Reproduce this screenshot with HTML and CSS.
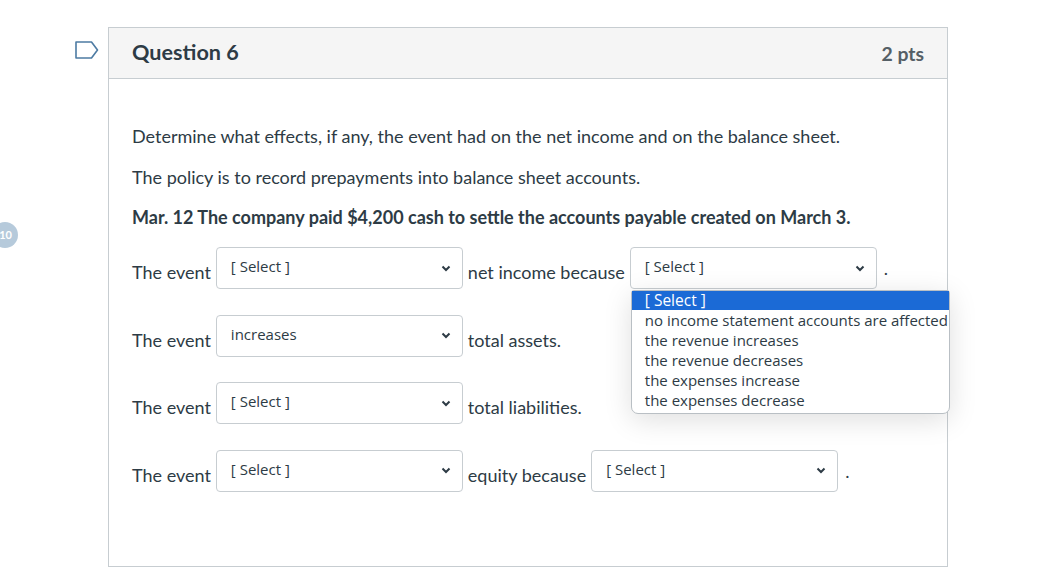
FILE: index.html
```html
<!DOCTYPE html>
<html>
<head>
<meta charset="utf-8">
<link rel="stylesheet" href="styles.css">
</head>
<body>
<div class="badge">10</div>
<div class="page">
  <div class="gutter">
    <svg class="flag" width="24" height="18" viewBox="0 0 24 18"><path d="M1 1 H16.5 L22.5 9 L16.5 17 H1 Z" fill="none" stroke="#4d7ba3" stroke-width="1.6" stroke-linejoin="round"/></svg>
  </div>
  <div class="card">
    <div class="card-head">
      <span class="q-title">Question 6</span>
      <span class="q-pts">2 pts</span>
    </div>
    <div class="card-body">
      <p class="para">Determine what effects, if any, the event had on the net income and on the balance sheet.</p>
      <p class="para">The policy is to record prepayments into balance sheet accounts.</p>
      <p class="para strong">Mar. 12 The company paid $4,200 cash to settle the accounts payable created on March 3.</p>

      <div class="row">
        <span class="lbl">The event</span>
        <div class="sel"><span class="sel-text">[ Select ]</span><svg class="chev" width="10" height="7" viewBox="0 0 10 7"><path d="M1.5 1.5 L5 5 L8.5 1.5" fill="none" stroke="#2d3b45" stroke-width="2"/></svg></div>
        <span class="lbl">net income because</span>
        <div class="sel open"><span class="sel-text">[ Select ]</span><svg class="chev" width="10" height="7" viewBox="0 0 10 7"><path d="M1.5 1.5 L5 5 L8.5 1.5" fill="none" stroke="#2d3b45" stroke-width="2"/></svg>
          <ul class="menu">
            <li class="opt active">[ Select ]</li>
            <li class="opt">no income statement accounts are affected</li>
            <li class="opt">the revenue increases</li>
            <li class="opt">the revenue decreases</li>
            <li class="opt">the expenses increase</li>
            <li class="opt">the expenses decrease</li>
          </ul>
        </div>
        <span class="lbl dot">.</span>
      </div>

      <div class="row">
        <span class="lbl">The event</span>
        <div class="sel"><span class="sel-text">increases</span><svg class="chev" width="10" height="7" viewBox="0 0 10 7"><path d="M1.5 1.5 L5 5 L8.5 1.5" fill="none" stroke="#2d3b45" stroke-width="2"/></svg></div>
        <span class="lbl">total assets.</span>
      </div>

      <div class="row">
        <span class="lbl">The event</span>
        <div class="sel"><span class="sel-text">[ Select ]</span><svg class="chev" width="10" height="7" viewBox="0 0 10 7"><path d="M1.5 1.5 L5 5 L8.5 1.5" fill="none" stroke="#2d3b45" stroke-width="2"/></svg></div>
        <span class="lbl">total liabilities.</span>
      </div>

      <div class="row">
        <span class="lbl">The event</span>
        <div class="sel"><span class="sel-text">[ Select ]</span><svg class="chev" width="10" height="7" viewBox="0 0 10 7"><path d="M1.5 1.5 L5 5 L8.5 1.5" fill="none" stroke="#2d3b45" stroke-width="2"/></svg></div>
        <span class="lbl">equity because</span>
        <div class="sel"><span class="sel-text">[ Select ]</span><svg class="chev" width="10" height="7" viewBox="0 0 10 7"><path d="M1.5 1.5 L5 5 L8.5 1.5" fill="none" stroke="#2d3b45" stroke-width="2"/></svg></div>
        <span class="lbl dot">.</span>
      </div>
    </div>
  </div>
</div>
</body>
</html>
```

FILE: styles.css
```css
html, body {
  margin: 0;
  padding: 0;
  background: #ffffff;
}
body {
  font-family: Lato, "Liberation Sans", sans-serif;
  color: #2d3b45;
  width: 1048px;
  height: 582px;
  overflow: hidden;
  position: relative;
}
.badge {
  position: absolute;
  left: -8px;
  top: 222px;
  width: 26px;
  height: 26px;
  border-radius: 50%;
  background: #b6cadb;
  color: #ffffff;
  font-size: 11px;
  font-weight: bold;
  line-height: 26px;
  text-align: right;
  padding-right: 6px;
  box-sizing: border-box;
}
.page {
  display: flex;
  padding-top: 27px;
  padding-left: 75px;
}
.gutter {
  width: 33px;
  flex: none;
}
.flag {
  display: block;
  margin-top: 14px;
}
.card {
  width: 838px;
  height: 538px;
  border: 1px solid #c7cdd1;
  flex: none;
}
.card-head {
  height: 50px;
  background: #f5f5f5;
  border-bottom: 1px solid #c7cdd1;
  display: flex;
  align-items: center;
  justify-content: space-between;
  padding: 0 23px 0 23px;
}
.q-title {
  font-size: 21.6px;
  font-weight: bold;
  color: #2d3b45;
  margin-top: -3px;
}
.q-pts {
  font-size: 19.4px;
  font-weight: bold;
  color: #555f66;
}
.card-body {
  padding: 44px 23px 0 23px;
}
.para {
  margin: 0 0 13.5px 0;
  font-size: 18px;
  line-height: 27px;
}
.para.strong {
  font-weight: bold;
  margin-bottom: 16px;
}
.row {
  display: flex;
  align-items: center;
  gap: 5px;
  margin-bottom: 25.5px;
  font-size: 18px;
}
.lbl {
  padding-top: 8px;
  white-space: nowrap;
}
.lbl.dot {
  margin-left: 2px;
  padding-top: 0;
}
.sel {
  position: relative;
  height: 40px;
  border: 1px solid #c7cdd1;
  border-radius: 4px;
  background: #ffffff;
  display: flex;
  align-items: center;
  justify-content: space-between;
  padding: 0 11px 0 14px;
  box-sizing: content-box;
  width: 220px;
}
.sel-text {
  font-family: "Open Sans", "Noto Sans", sans-serif;
  font-size: 15px;
  color: #2d3b45;
  margin-top: -4px;
}
.chev {
  display: block;
}
.menu {
  position: absolute;
  left: 0;
  top: 42px;
  width: 317px;
  margin: 0;
  padding: 0 0 3px 0;
  list-style: none;
  background: #ffffff;
  border: 1px solid #b9bfc4;
  border-radius: 3px 3px 7px 7px;
  box-shadow: 0 6px 28px rgba(0, 0, 0, 0.13);
  z-index: 5;
}
.opt {
  font-family: "Open Sans", "Noto Sans", sans-serif;
  font-size: 15px;
  line-height: 20px;
  height: 20px;
  padding-left: 13px;
  color: #2d3b45;
  white-space: nowrap;
}
.opt.active {
  background: #1b6ad6;
  color: #ffffff;
  font-size: 15.5px;
  height: 19px;
  line-height: 19px;
}
```
